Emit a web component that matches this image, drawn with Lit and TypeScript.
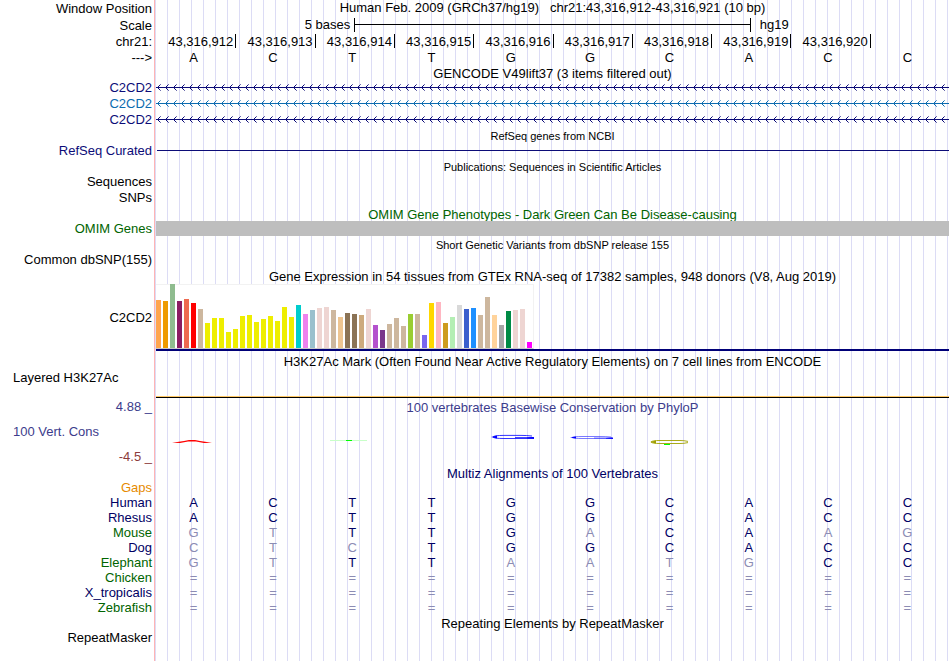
import { LitElement, html, svg, css, nothing } from 'lit';
import { customElement, property } from 'lit/decorators.js';
import { classMap } from 'lit/directives/class-map.js';

const BASES = 'ACTTGGCACC';
const START = 43316912;

const ALIGNMENT = [
  { name: 'Human', tone: 'navy', seq: 'ACTTGGCACC' },
  { name: 'Rhesus', tone: 'navy', seq: 'ACTTGGCACC' },
  { name: 'Mouse', tone: 'green', seq: 'GTTTGACAAG' },
  { name: 'Dog', tone: 'navy', seq: 'CTCTGGCACC' },
  { name: 'Elephant', tone: 'green', seq: 'GTTTAATGCC' },
  { name: 'Chicken', tone: 'green', seq: '==========' },
  { name: 'X_tropicalis', tone: 'navy', seq: '==========' },
  { name: 'Zebrafish', tone: 'green', seq: '==========' },
];

// GTEx tissues in track order: [height in px, tissue colour]
const TISSUES: [number, string][] = [
  [48, '#ffa54f'], [47, '#ee9a00'], [64, '#8fbc8f'], [47, '#8b1c62'],
  [49, '#ee6a50'], [45, '#ff0000'], [39, '#cdb79e'], [25, '#eeee00'],
  [30, '#eeee00'], [30, '#eeee00'], [16, '#eeee00'], [19, '#eeee00'],
  [32, '#eeee00'], [33, '#eeee00'], [26, '#eeee00'], [29, '#eeee00'],
  [32, '#eeee00'], [27, '#eeee00'], [41, '#eeee00'], [31, '#eeee00'],
  [43, '#00cdcd'], [34, '#ee82ee'], [38, '#9ac0cd'], [40, '#eed5d2'],
  [41, '#eed5d2'], [38, '#cdb79e'], [31, '#eec591'], [35, '#8b7355'],
  [34, '#8b7355'], [33, '#cdaa7d'], [39, '#eed5d2'], [23, '#b452cd'],
  [18, '#7a378b'], [24, '#cdb79e'], [30, '#cdb79e'], [22, '#cdb79e'],
  [34, '#9acd32'], [34, '#cdb79e'], [13, '#7a67ee'], [45, '#ffd700'],
  [46, '#ffb6c1'], [25, '#cd9b1d'], [31, '#b4eeb4'], [43, '#d9d9d9'],
  [39, '#3a5fcd'], [40, '#1e90ff'], [33, '#cdb79e'], [51, '#cdb79e'],
  [33, '#ffd39b'], [23, '#a6a6a6'], [37, '#008b45'], [38, '#eed5d2'],
  [39, '#eed5d2'], [6, '#ff00ff'],
];

// Conservation marks, one slot per base
const MARKS = [
  svg`<path d="M2 8.8 L14 7 L19 6 H25 L30 7 L42 8.8 L34 8.9 L26 7.6 H18 L10 8.9 Z" fill="#f00"/>`,
  nothing,
  svg`<rect x="2" y="6" width="37" height="1" fill="#c8ffc8" shape-rendering="crispEdges"/>
      <rect x="18" y="6" width="6" height="1" fill="#0f0" shape-rendering="crispEdges"/>`,
  nothing,
  svg`<path d="M45 2 Q40 1.4 34 1.4 H17 Q7 1.4 6 3 Q7 4.5 17 4.5 H40 Q46 4.5 46 3.6 H28" fill="none" stroke="#00f" stroke-width="0.8"/>
      <path d="M4 3 L10 1.6 V4.4 Z M40 3.4 L47 3 V5 L40 4.5 Z" fill="#00f"/>`,
  svg`<path d="M45 3 Q40 2.5 34 2.5 H17 Q7 2.5 6 3.5 Q7 4.5 17 4.5 H40 Q46 4.5 46 4 H28" fill="none" stroke="#22f" stroke-width="0.6"/>
      <path d="M4 3.5 L10 2.5 V4.5 Z M40 4 L47 3.4 V5 L40 4.6 Z" fill="#00f"/>`,
  svg`<path d="M43 7.4 Q39 6.5 35 6.5 H15 Q7 6.5 6 8 Q7 9.5 15 9.5 H35 Q39 9.5 43 8.6" fill="none" stroke="#a0a000" stroke-width="0.9"/>
      <path d="M5 8 L11 6.6 V9.4 Z" fill="#a0a000"/>
      <rect x="19" y="10" width="6" height="1" fill="#0f0" shape-rendering="crispEdges"/>`,
  nothing,
  nothing,
  nothing,
];

/** A minus-strand intron line: solid with left-pointing chevrons every 8px. */
@customElement('strand-line')
export class StrandLine extends LitElement {
  @property() color = '#0c0c78';

  static styles = css`
    :host {
      display: block;
      height: 7px;
    }
    svg {
      display: block;
      width: 100%;
      height: 7px;
    }
  `;

  render() {
    return html`
      <svg aria-hidden="true" shape-rendering="crispEdges">
        <defs>
          <pattern id="arrows" width="8" height="7" patternUnits="userSpaceOnUse">
            <path
              d="M0 3h8v1h-8z M1 3h1v1h-1z M2 2h1v1h-1z M3 1h1v1h-1z M2 4h1v1h-1z M3 5h1v1h-1z"
              fill=${this.color}
            />
            <path d="M4 0h1v1h-1z M4 6h1v1h-1z" fill=${this.color} opacity="0.6" />
          </pattern>
        </defs>
        <rect width="100%" height="7" fill="url(#arrows)" />
      </svg>
    `;
  }
}

@customElement('app-root')
export class AppRoot extends LitElement {
  static styles = css`
    :host {
      --label-width: 155px;
      --navy: #0c0c78;
      display: flex;
      flex-direction: column;
      min-height: 100vh;
      font: 13px/15px 'Liberation Sans', Arial, sans-serif;
      color: #000;
      background: #fff linear-gradient(to right, #dcdcf5 1px, transparent 1px) 167px 0 / 12px 100%;
    }

    /* ── Rows ─────────────────── */
    .row {
      display: grid;
      grid-template-columns: var(--label-width) minmax(0, 1fr);
      height: 16px;
      flex: none;
    }
    .row.tight { height: 15px; }
    .row.tall { height: 17px; }
    .row.spaced { height: 19px; }
    .row.graph { height: 67px; }
    .row.histone { height: 28px; }
    .row.wiggle { height: 67px; }
    .row.fill {
      flex: 1;
      height: auto;
    }
    .label {
      box-sizing: border-box;
      display: flex;
      align-items: flex-start;
      justify-content: flex-end;
      padding-right: 2px;
      border-right: 1px solid #ffb4b4;
      background: #fff;
      white-space: nowrap;
      font-weight: normal;
    }
    .tall .label,
    .graph .label {
      align-items: center;
    }
    .label.left {
      justify-content: flex-start;
      padding-left: 13px;
    }
    .track {
      padding: 0 1px;
      min-width: 0;
    }
    .title {
      margin: 0;
      font-size: 13px;
      font-weight: normal;
      line-height: 17px;
      text-align: center;
      white-space: pre;
    }
    h1.title { line-height: 15px; }
    .title.small { font-size: 11px; }
    .spaced .title { line-height: 21px; }

    .navy { color: #000064; }
    .gene { color: var(--navy); }
    .sky { color: #0c6cb0; }
    .green { color: #006400; }
    .gaps { color: #e68a00; }
    .blue { color: #3c3c8c; }
    .red { color: #8c3c3c; }

    /* ── Scale and ruler ──────── */
    .scale {
      display: grid;
      grid-template-columns: 1fr 2fr 1fr;
      align-items: center;
    }
    .scale .from {
      text-align: right;
      padding-right: 4px;
    }
    .scale .to { padding-left: 9px; }
    .scale .bar {
      display: flex;
      align-items: center;
      height: 14px;
      border: solid #000;
      border-width: 0 1px;
    }
    .scale .bar::before {
      content: '';
      flex: 1;
      height: 1px;
      background: #000;
    }
    .ten {
      display: grid;
      grid-template-columns: repeat(10, minmax(0, 1fr));
    }
    .tick {
      height: 14px;
      line-height: 16px;
      margin-right: -1px;
      padding-right: 2px;
      border-right: 1px solid #000;
      text-align: right;
    }
    .tick:last-child { border-color: transparent; }
    .base {
      padding: 0 4px 0 0;
      text-align: center;
    }
    .differs { color: #8c8cb4; }

    /* ── Tracks ───────────────── */
    .strand { padding: 4px 1px 0; }
    .refseq {
      height: 1px;
      margin: 7px 0 0 1px;
      background: var(--navy);
    }
    .omim {
      height: 15px;
      background: #bebebe;
    }
    .expression {
      border-bottom: 2px solid #000078;
      height: 65px;
    }
    .tissues {
      box-sizing: border-box;
      display: flex;
      align-items: flex-end;
      gap: 2px;
      width: max-content;
      height: 65px;
      border: solid #f2f2f2;
      border-width: 0 1px 0 0;
      border-bottom: 1px solid #c8c8c8;
      background: linear-gradient(#f2f2f2 1px, #fff 1px);
    }
    .tissue { width: 5px; }
    .tissue:last-child { margin-right: 1px; }
    .layered {
      box-sizing: border-box;
      height: 28px;
      border-bottom: 1px solid #000;
      box-shadow: inset 0 -1px #ffc864;
    }

    .scores {
      box-sizing: border-box;
      display: grid;
      grid-template-rows: repeat(3, 15px);
      row-gap: 10px;
      padding: 1px 2px 0 13px;
      border-right: 1px solid #ffb4b4;
      background: #fff;
    }
    .limit { text-align: right; }
    .wiggle .title { padding-top: 1px; }
    .wiggle .ten { margin-top: 18px; }
    .mark {
      padding-right: 4px;
      text-align: center;
    }
    .mark svg {
      display: block;
      width: 48px;
      height: 12px;
      margin: 0 auto;
    }

    .alignment,
    .alignment tbody { display: block; }
    .alignment .row {
      grid-template-columns: var(--label-width) 1px repeat(10, minmax(0, 1fr)) 1px;
    }
    .alignment .base:nth-child(2) { grid-column-start: 3; }
    .alignment .label { padding: 0 2px 0 0; }
  `;

  render() {
    return html`
      ${this._row('Window Position', html`<h1 class="title">Human Feb. 2009 (GRCh37/hg19)   chr21:43,316,912-43,316,921 (10 bp)</h1>`, 'tall')}
      ${this._row('Scale', html`
        <div class="scale">
          <span class="from">5 bases</span><span class="bar"></span><span class="to">hg19</span>
        </div>`, 'tall')}
      ${this._row('chr21:', html`
        <div class="ten">
          ${[...BASES].map((_, i) => html`
            <div class="tick">${i < 9 ? (START + i).toLocaleString('en-US') : nothing}</div>`)}
        </div>`)}
      ${this._row('--->', html`
        <div class="ten">${[...BASES].map((b) => html`<div class="base">${b}</div>`)}</div>`, 'tight')}

      ${this._title('GENCODE V49lift37 (3 items filtered out)')}
      ${this._row('C2CD2', html`<strand-line></strand-line>`, '', 'gene', 'strand')}
      ${this._row('C2CD2', html`<strand-line color="#0c6cb0"></strand-line>`, '', 'sky', 'strand')}
      ${this._row('C2CD2', html`<strand-line></strand-line>`, '', 'gene', 'strand')}

      ${this._title('RefSeq genes from NCBI', 'small')}
      ${this._row('RefSeq Curated', html`<div class="refseq"></div>`, '', 'gene')}

      ${this._title('Publications: Sequences in Scientific Articles', 'small')}
      ${this._row('Sequences')}
      ${this._row('SNPs')}

      ${this._title('OMIM Gene Phenotypes - Dark Green Can Be Disease-causing', 'green')}
      ${this._row('OMIM Genes', html`<div class="omim"></div>`, '', 'green')}

      ${this._title('Short Genetic Variants from dbSNP release 155', 'small')}
      ${this._row('Common dbSNP(155)')}

      ${this._row('', html`<h2 class="title">Gene Expression in 54 tissues from GTEx RNA-seq of 17382 samples, 948 donors (V8, Aug 2019)</h2>`)}
      ${this._row('C2CD2', html`
        <div class="expression">
          <div class="tissues">
            ${TISSUES.map(([height, color]) => html`
              <div class="tissue" style="height:${height}px;background:${color}"></div>`)}
          </div>
        </div>`, 'graph')}

      ${this._row('', html`<h2 class="title">H3K27Ac Mark (Often Found Near Active Regulatory Elements) on 7 cell lines from ENCODE</h2>`, 'spaced')}
      ${this._row('Layered H3K27Ac', html`<div class="layered"></div>`, 'histone', 'left')}

      <section class="row wiggle">
        <div class="scores blue">
          <span class="limit">4.88 _</span>
          <span>100 Vert. Cons</span>
          <span class="limit red">-4.5 _</span>
        </div>
        <div class="track">
          <h2 class="title blue">100 vertebrates Basewise Conservation by PhyloP</h2>
          <div class="ten">
            ${MARKS.map((m) => html`
              <div class="mark">${m === nothing ? nothing : html`<svg viewBox="0 0 48 12" aria-hidden="true">${m}</svg>`}</div>`)}
          </div>
        </div>
      </section>

      ${this._title('Multiz Alignments of 100 Vertebrates', 'navy')}
      ${this._row('Gaps', nothing, 'tight', 'gaps')}
      <table class="alignment" cellspacing="0">
        <tbody>
          ${ALIGNMENT.map((species) => html`
            <tr class="row tight">
              <th scope="row" class="label ${species.tone}">${species.name}</th>
              ${[...species.seq].map((b, i) => html`
                <td class=${classMap({ base: true, navy: b === BASES[i], differs: b !== BASES[i] })}>${b}</td>`)}
            </tr>`)}
        </tbody>
      </table>

      ${this._title('Repeating Elements by RepeatMasker')}
      ${this._row('RepeatMasker', nothing, 'tight')}
      ${this._row('', nothing, 'fill')}
    `;
  }

  _row(label: string, content: unknown = nothing, size = '', tone = '', track = '') {
    return html`
      <div class="row ${size}">
        <div class="label ${tone}">${label}</div>
        <div class="track ${track}">${content}</div>
      </div>
    `;
  }

  _title(text: string, tone = '') {
    return this._row('', html`<h2 class="title ${tone}">${text}</h2>`, 'tight');
  }
}
